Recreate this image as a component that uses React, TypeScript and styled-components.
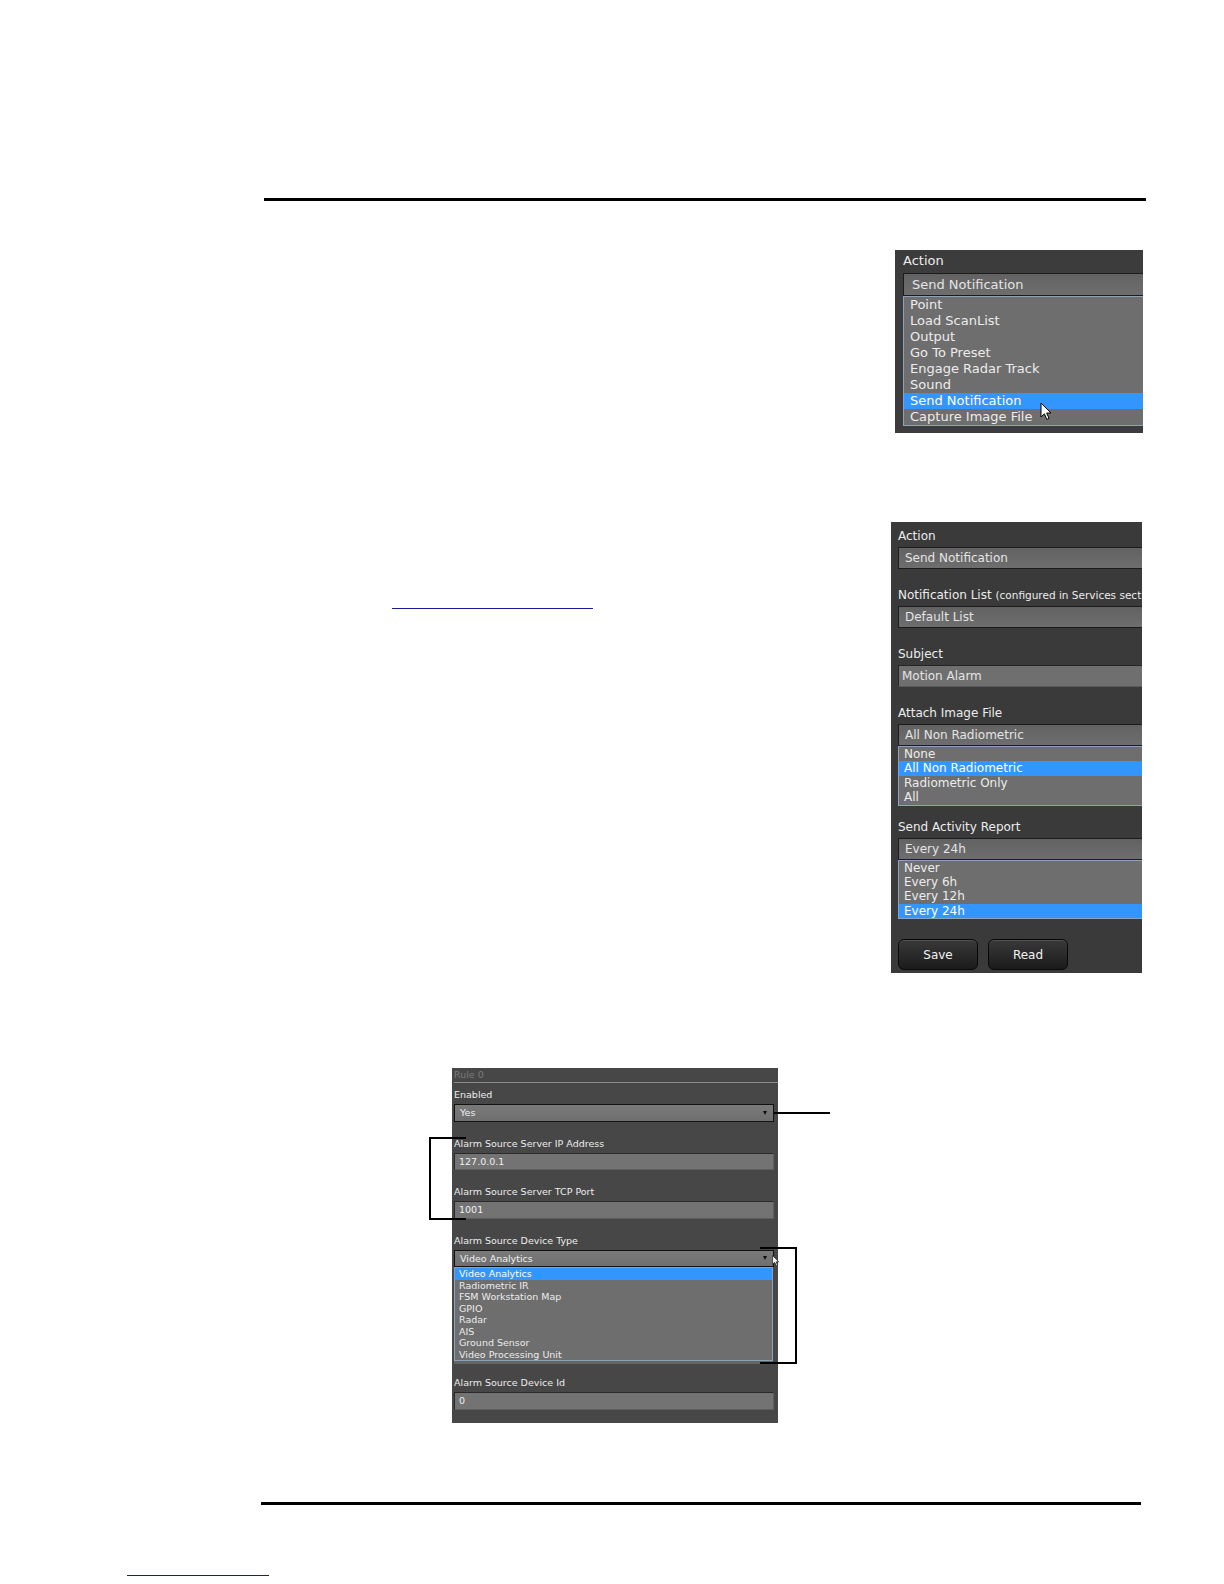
import React from "react";
import styled, { createGlobalStyle } from "styled-components";

const GlobalStyle = createGlobalStyle`
  html, body {
    margin: 0;
    padding: 0;
    background: #ffffff;
  }
`;

const Page = styled.div`
  width: 1224px;
  min-height: 1584px;
  background: #ffffff;
  font-family: "DejaVu Sans", Verdana, sans-serif;
  overflow: hidden;
`;

const Rule = styled.div<{ $top: number; $left: number; $width: number }>`
  margin: ${(p) => p.$top}px 0 0 ${(p) => p.$left}px;
  width: ${(p) => p.$width}px;
  height: 3px;
  background: #000000;
`;

const Row = styled.div<{ $top: number; $left?: number; $right?: number; $justify: string }>`
  display: flex;
  justify-content: ${(p) => p.$justify};
  align-items: flex-start;
  margin-top: ${(p) => p.$top}px;
  padding-left: ${(p) => p.$left || 0}px;
  padding-right: ${(p) => p.$right || 0}px;
`;

const DocLink = styled.a<{ $top: number; $left?: number; $width: number }>`
  display: block;
  box-sizing: content-box;
  margin-top: ${(p) => p.$top}px;
  margin-left: ${(p) => p.$left || 0}px;
  width: ${(p) => p.$width}px;
  height: 14px;
  border-bottom: 1px solid #1b1b8f;
`;

// screenshots ---------------------------------------------------------------

const Shot = styled.div<{ $w: number; $h: number; $bg: string; $pad: string }>`
  position: relative;
  box-sizing: border-box;
  width: ${(p) => p.$w}px;
  height: ${(p) => p.$h}px;
  padding: ${(p) => p.$pad};
  background: ${(p) => p.$bg};
  color: #e8e8e8;
  overflow: hidden;
  flex-shrink: 0;
`;

const ShotTitle = styled.div`
  height: 14px;
  line-height: 14px;
  font-size: 9.5px;
  color: #7b7b7b;
  border-bottom: 1px solid #8a8a8a;
  margin-bottom: 6px;
`;

const FieldLabel = styled.div<{ $fs: number; $lh: number; $mt?: number; $mb: number }>`
  font-size: ${(p) => p.$fs}px;
  line-height: ${(p) => p.$lh}px;
  margin-top: ${(p) => p.$mt || 0}px;
  margin-bottom: ${(p) => p.$mb}px;
  color: #ececec;
  white-space: nowrap;
`;

const LabelNote = styled.span`
  font-size: 10.5px;
`;

const SelectBox = styled.div<{ $fs: number; $h: number; $pl: number; $w: number }>`
  display: flex;
  align-items: center;
  justify-content: space-between;
  box-sizing: border-box;
  width: ${(p) => p.$w}px;
  height: ${(p) => p.$h}px;
  padding: 0 6px 0 ${(p) => p.$pl}px;
  font-size: ${(p) => p.$fs}px;
  color: #e4e4e4;
  background: linear-gradient(#626262, #6e6e6e);
  border: 1px solid #1c1c1c;
  white-space: nowrap;
`;

const InputBox = styled(SelectBox)`
  background: #6f6f6f;
  border-color: #262626 #5a5a5a #5a5a5a #262626;
`;

const SmallSelect = styled(SelectBox)`
  background: linear-gradient(#7a7a7a, #6f6f6f);
  border-color: #121212;
  color: #f0f0f0;
`;

const SmallInput = styled(SelectBox)`
  background: #737373;
  border-color: #2a2a2a #5e5e5e #5e5e5e #2a2a2a;
  color: #f0f0f0;
`;

const DropArrow = styled.span`
  width: 0;
  height: 0;
  border-left: 2.5px solid transparent;
  border-right: 2.5px solid transparent;
  border-top: 4px solid #101010;
`;

const OptionList = styled.ul<{ $fs: number; $w: number; $footer?: boolean }>`
  list-style: none;
  margin: 0;
  padding: 0;
  box-sizing: border-box;
  width: ${(p) => p.$w}px;
  font-size: ${(p) => p.$fs}px;
  background: #6e6e6e;
  border: 1px solid #8ca2bc;
  box-shadow: ${(p) => (p.$footer ? "0 3px 0 #646464" : "none")};
`;

const OptionItem = styled.li<{ $h: number; $pl: number; $active?: boolean }>`
  height: ${(p) => p.$h}px;
  line-height: ${(p) => p.$h}px;
  padding-left: ${(p) => p.$pl}px;
  white-space: nowrap;
  color: ${(p) => (p.$active ? "#ffffff" : "#ececec")};
  background: ${(p) => (p.$active ? "#3396ff" : "transparent")};
`;

const ButtonRow = styled.div`
  display: flex;
  gap: 10px;
  margin-top: 20px;
`;

const ShotButton = styled.button`
  width: 80px;
  height: 31px;
  border-radius: 6px;
  border: 1px solid #080808;
  background: linear-gradient(#393939, #1b1b1b);
  box-shadow: inset 0 1px 0 rgba(255, 255, 255, 0.12);
  color: #f2f2f2;
  font-family: "DejaVu Sans", Verdana, sans-serif;
  font-size: 12px;
  padding: 0;
`;

const Pointer = styled.svg<{ $x: number; $y: number }>`
  position: absolute;
  left: ${(p) => p.$x}px;
  top: ${(p) => p.$y}px;
`;

// callouts over the third screenshot
const Leader = styled.div<{ $x: number; $y: number; $w: number }>`
  position: absolute;
  left: ${(p) => p.$x}px;
  top: ${(p) => p.$y}px;
  width: ${(p) => p.$w}px;
  height: 2px;
  background: #000000;
`;

const Bracket = styled.div<{ $x: number; $y: number; $w: number; $h: number; $open: "left" | "right" }>`
  position: absolute;
  box-sizing: border-box;
  left: ${(p) => p.$x}px;
  top: ${(p) => p.$y}px;
  width: ${(p) => p.$w}px;
  height: ${(p) => p.$h}px;
  border: 2px solid #000000;
  border-${(p) => p.$open}: none;
`;

const Arrow = ({ x, y, scale = 1 }: { x: number; y: number; scale?: number }) => (
  <Pointer $x={x} $y={y} width={12 * scale} height={19 * scale} viewBox="0 0 12 19">
    <path
      d="M1 1 L1 15 L4.4 11.8 L6.8 17.4 L9 16.4 L6.7 11 L11 11 Z"
      fill="#ffffff"
      stroke="#000000"
      strokeWidth="1"
      strokeLinejoin="round"
    />
  </Pointer>
);

const actionOptions = [
  "Point",
  "Load ScanList",
  "Output",
  "Go To Preset",
  "Engage Radar Track",
  "Sound",
  "Send Notification",
  "Capture Image File",
];

const attachOptions = ["None", "All Non Radiometric", "Radiometric Only", "All"];
const reportOptions = ["Never", "Every 6h", "Every 12h", "Every 24h"];

const deviceTypes = [
  "Video Analytics",
  "Radiometric IR",
  "FSM Workstation Map",
  "GPIO",
  "Radar",
  "AIS",
  "Ground Sensor",
  "Video Processing Unit",
];

const ActionDropdown = () => (
  <Shot $w={248} $h={183} $bg="#3c3c3c" $pad="1px 0 0 8px">
    <FieldLabel $fs={13} $lh={20} $mb={2}>
      Action
    </FieldLabel>
    <SelectBox $fs={13} $h={23} $pl={8} $w={260}>
      Send Notification
    </SelectBox>
    <OptionList $fs={13} $w={260}>
      {actionOptions.map((o) => (
        <OptionItem key={o} $h={16} $pl={6} $active={o === "Send Notification"}>
          {o}
        </OptionItem>
      ))}
    </OptionList>
    <Arrow x={145} y={152} />
  </Shot>
);

const NotificationForm = () => (
  <Shot $w={251} $h={451} $bg="#3a3a3a" $pad="7px 0 0 7px">
    <FieldLabel $fs={12} $lh={14} $mb={4}>
      Action
    </FieldLabel>
    <SelectBox $fs={12} $h={22} $pl={6} $w={260}>
      Send Notification
    </SelectBox>
    <FieldLabel $fs={12} $lh={14} $mt={19} $mb={4}>
      Notification List <LabelNote>(configured in Services section)</LabelNote>
    </FieldLabel>
    <SelectBox $fs={12} $h={22} $pl={6} $w={260}>
      Default List
    </SelectBox>
    <FieldLabel $fs={12} $lh={14} $mt={19} $mb={4}>
      Subject
    </FieldLabel>
    <InputBox $fs={12} $h={22} $pl={3} $w={260}>
      Motion Alarm
    </InputBox>
    <FieldLabel $fs={12} $lh={14} $mt={19} $mb={4}>
      Attach Image File
    </FieldLabel>
    <SelectBox $fs={12} $h={22} $pl={6} $w={260}>
      All Non Radiometric
    </SelectBox>
    <OptionList $fs={12} $w={260}>
      {attachOptions.map((o) => (
        <OptionItem key={o} $h={14.4} $pl={5} $active={o === "All Non Radiometric"}>
          {o}
        </OptionItem>
      ))}
    </OptionList>
    <FieldLabel $fs={12} $lh={14} $mt={14} $mb={4}>
      Send Activity Report
    </FieldLabel>
    <SelectBox $fs={12} $h={22} $pl={6} $w={260}>
      Every 24h
    </SelectBox>
    <OptionList $fs={12} $w={260}>
      {reportOptions.map((o) => (
        <OptionItem key={o} $h={14.4} $pl={5} $active={o === "Every 24h"}>
          {o}
        </OptionItem>
      ))}
    </OptionList>
    <ButtonRow>
      <ShotButton>Save</ShotButton>
      <ShotButton>Read</ShotButton>
    </ButtonRow>
  </Shot>
);

const RuleForm = () => (
  <Shot $w={326} $h={355} $bg="#474747" $pad="0 0 0 2px">
    <ShotTitle>Rule 0</ShotTitle>
    <FieldLabel $fs={9.5} $lh={12} $mb={3}>
      Enabled
    </FieldLabel>
    <SmallSelect $fs={9.5} $h={17.5} $pl={5} $w={320}>
      Yes
      <DropArrow />
    </SmallSelect>
    <FieldLabel $fs={9.5} $lh={12} $mt={16} $mb={3}>
      Alarm Source Server IP Address
    </FieldLabel>
    <SmallInput $fs={9.5} $h={17.5} $pl={4} $w={320}>
      127.0.0.1
    </SmallInput>
    <FieldLabel $fs={9.5} $lh={12} $mt={16} $mb={3}>
      Alarm Source Server TCP Port
    </FieldLabel>
    <SmallInput $fs={9.5} $h={17.5} $pl={4} $w={320}>
      1001
    </SmallInput>
    <FieldLabel $fs={9.5} $lh={12} $mt={16} $mb={3}>
      Alarm Source Device Type
    </FieldLabel>
    <SmallSelect $fs={9.5} $h={17.5} $pl={5} $w={320}>
      Video Analytics
      <DropArrow />
    </SmallSelect>
    <OptionList $fs={9.5} $w={319} $footer>
      {deviceTypes.map((o) => (
        <OptionItem key={o} $h={11.5} $pl={4} $active={o === "Video Analytics"}>
          {o}
        </OptionItem>
      ))}
    </OptionList>
    <FieldLabel $fs={9.5} $lh={12} $mt={16} $mb={3}>
      Alarm Source Device Id
    </FieldLabel>
    <SmallInput $fs={9.5} $h={17.5} $pl={4} $w={320}>
      0
    </SmallInput>
  </Shot>
);

const CalloutFrame = styled.div`
  position: relative;
`;

export default function App() {
  return (
    <Page>
      <GlobalStyle />
      <Rule $top={198} $left={264} $width={882} />

      <Row $top={49} $right={81} $justify="flex-end">
        <ActionDropdown />
      </Row>

      <Row $top={89} $left={392} $right={82} $justify="space-between">
        <DocLink $top={72} $width={201} href="#" />
        <NotificationForm />
      </Row>

      <Row $top={95} $left={452} $justify="flex-start">
        <CalloutFrame>
          <RuleForm />
          <Leader $x={322} $y={43.5} $w={56} />
          <Bracket $x={-23} $y={69} $w={37} $h={83} $open="right" />
          <Bracket $x={308} $y={178.5} $w={37} $h={117} $open="left" />
          <Arrow x={320} y={187} scale={0.62} />
        </CalloutFrame>
      </Row>

      <Rule $top={79} $left={261} $width={880} />
      <DocLink $top={56} $left={127} $width={142} href="#" />
    </Page>
  );
}
